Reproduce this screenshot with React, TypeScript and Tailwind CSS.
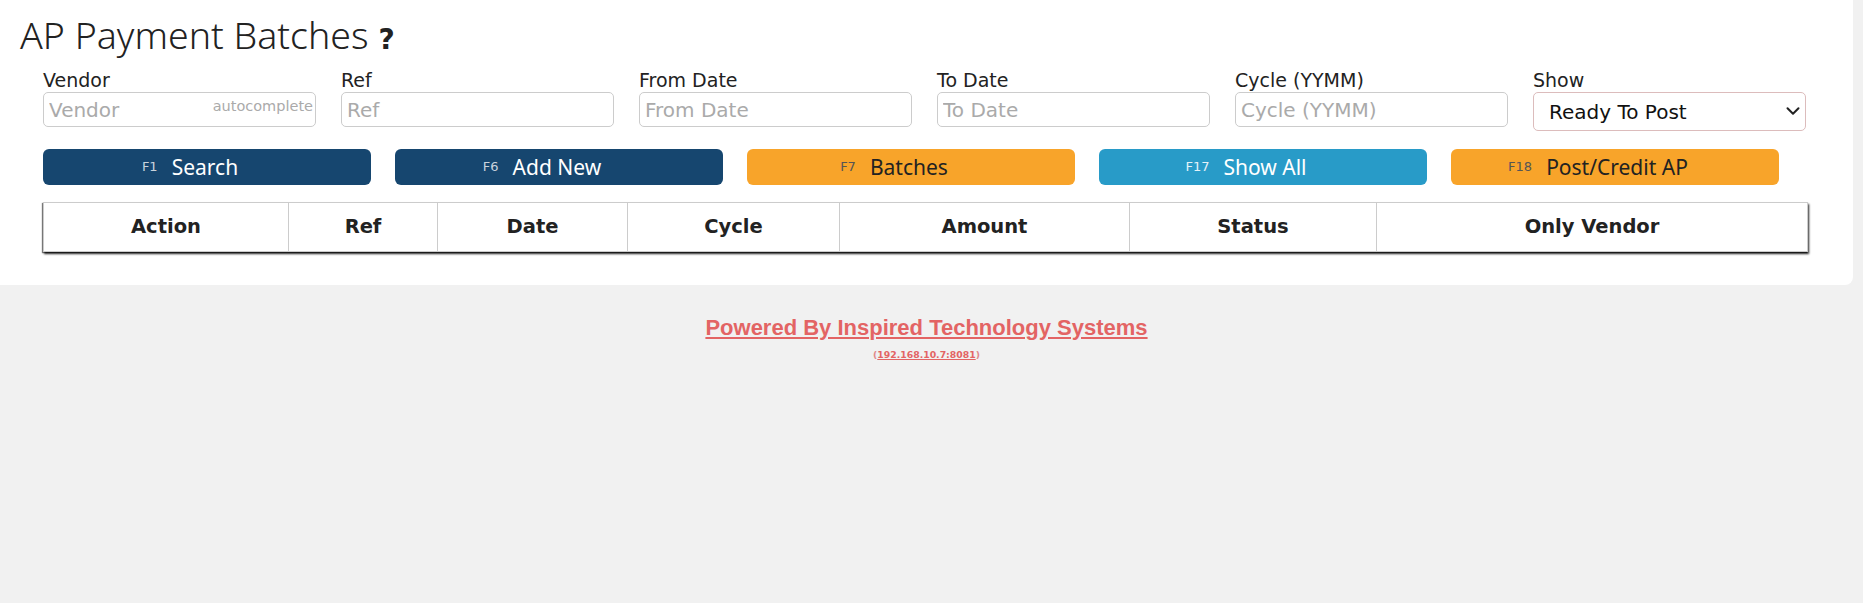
import { ChevronDown } from "lucide-react";

const filters = [
  { label: "Vendor", placeholder: "Vendor", hint: "autocomplete" },
  { label: "Ref", placeholder: "Ref" },
  { label: "From Date", placeholder: "From Date" },
  { label: "To Date", placeholder: "To Date" },
  { label: "Cycle (YYMM)", placeholder: "Cycle (YYMM)" },
];

const buttons = [
  { key: "F1", text: "Search", cls: "bg-[#16466f] text-white", keyCls: "text-[#c9d3dd]" },
  { key: "F6", text: "Add New", cls: "bg-[#16466f] text-white", keyCls: "text-[#c9d3dd]" },
  { key: "F7", text: "Batches", cls: "bg-[#f8a42a] text-[#222]", keyCls: "text-[#555]" },
  { key: "F17", text: "Show All", cls: "bg-[#289bc8] text-white", keyCls: "text-[#e4f2f8]" },
  { key: "F18", text: "Post/Credit AP", cls: "bg-[#f8a42a] text-[#222]", keyCls: "text-[#555]" },
];

const columns = [
  { name: "Action", w: "w-[244px]" },
  { name: "Ref", w: "w-[149px]" },
  { name: "Date", w: "w-[190px]" },
  { name: "Cycle", w: "w-[212px]" },
  { name: "Amount", w: "w-[290px]" },
  { name: "Status", w: "w-[247px]" },
  { name: "Only Vendor", w: "flex-1" },
];

function App() {
  return (
    <div className="min-h-[603px] bg-[#f1f1f1] font-['DejaVu_Sans',Verdana,sans-serif]">
      <div className="mr-[10px] h-[285px] rounded-br-lg bg-white">
        <h1 className="flex items-baseline pl-[20px] pt-[13px] h-[58px] font-['Noto_Sans',sans-serif] text-[37.5px] leading-[44px] font-light text-[#222]">
          AP Payment Batches
          <span className="ml-[10px] font-['DejaVu_Sans',sans-serif] text-[28px] font-bold text-[#222]">?</span>
        </h1>

        <div className="grid grid-cols-[repeat(6,273px)] gap-x-[25px] pl-[43px] pt-[11px]">
          {filters.map((f) => (
            <div key={f.label} className="flex flex-col">
              <label className="text-[19px] leading-[23px] text-[#222]">{f.label}</label>
              <div className="relative">
                <input
                  className="w-full h-[35px] rounded-[5px] border border-[#ccc] pl-[5px] pr-[6px] text-[20px] text-[#333] placeholder-[#aaa] outline-none"
                  placeholder={f.placeholder}
                />
                {f.hint && (
                  <span className="absolute right-[3px] top-[5px] text-[14.5px] leading-[18px] text-[#aaa]">
                    {f.hint}
                  </span>
                )}
              </div>
            </div>
          ))}
          <div className="flex flex-col">
            <label className="text-[19px] leading-[23px] text-[#222]">Show</label>
            <div className="relative">
              <select className="w-full h-[39px] appearance-none rounded-[5px] border border-[#dcbcbc] bg-white pl-[15px] text-[20px] text-[#111] outline-none">
                <option>Ready To Post</option>
                <option>Posted</option>
                <option>All</option>
              </select>
              <ChevronDown className="pointer-events-none absolute right-[2px] top-[8px] h-[22px] w-[22px] text-[#222]" strokeWidth={2.2} />
            </div>
          </div>
        </div>

        <div className="grid grid-cols-[repeat(5,328px)] gap-x-[24px] pl-[43px] pt-[18px]">
          {buttons.map((b) => (
            <button
              key={b.key}
              className={`flex h-[36px] items-center justify-center rounded-[6px] pr-[34px] ${b.cls}`}
            >
              <span className={`mr-[14px] text-[13px] ${b.keyCls}`}>{b.key}</span>
              <span className="font-['Noto_Sans',sans-serif] text-[21px] leading-[24px]">{b.text}</span>
            </button>
          ))}
        </div>

        <div className="mx-[43px] mt-[17px] w-[1765px] border border-[#ccc] bg-white shadow-[1px_2px_2px_rgba(0,0,0,0.85),-1px_1px_1px_rgba(0,0,0,0.5)]">
          <div className="flex h-[48px]">
            {columns.map((c, i) => (
              <div
                key={c.name}
                className={`${c.w} flex items-center justify-center text-[19.5px] font-bold text-[#222] ${i > 0 ? "border-l border-[#ccc]" : ""}`}
              >
                {c.name}
              </div>
            ))}
          </div>
        </div>
      </div>

      <div className="w-[1853px] pt-[26px] text-center">
        <a href="#" className="font-['Liberation_Sans',Arial,sans-serif] text-[22px] font-bold text-[#e36464] underline">
          Powered By Inspired Technology Systems
        </a>
        <div className="mt-[4px] text-[9.3px] font-bold text-[#e08a8a]">
          (<a href="#" className="text-[#e36464] underline">192.168.10.7:8081</a>)
        </div>
      </div>
    </div>
  );
}

export default App;
